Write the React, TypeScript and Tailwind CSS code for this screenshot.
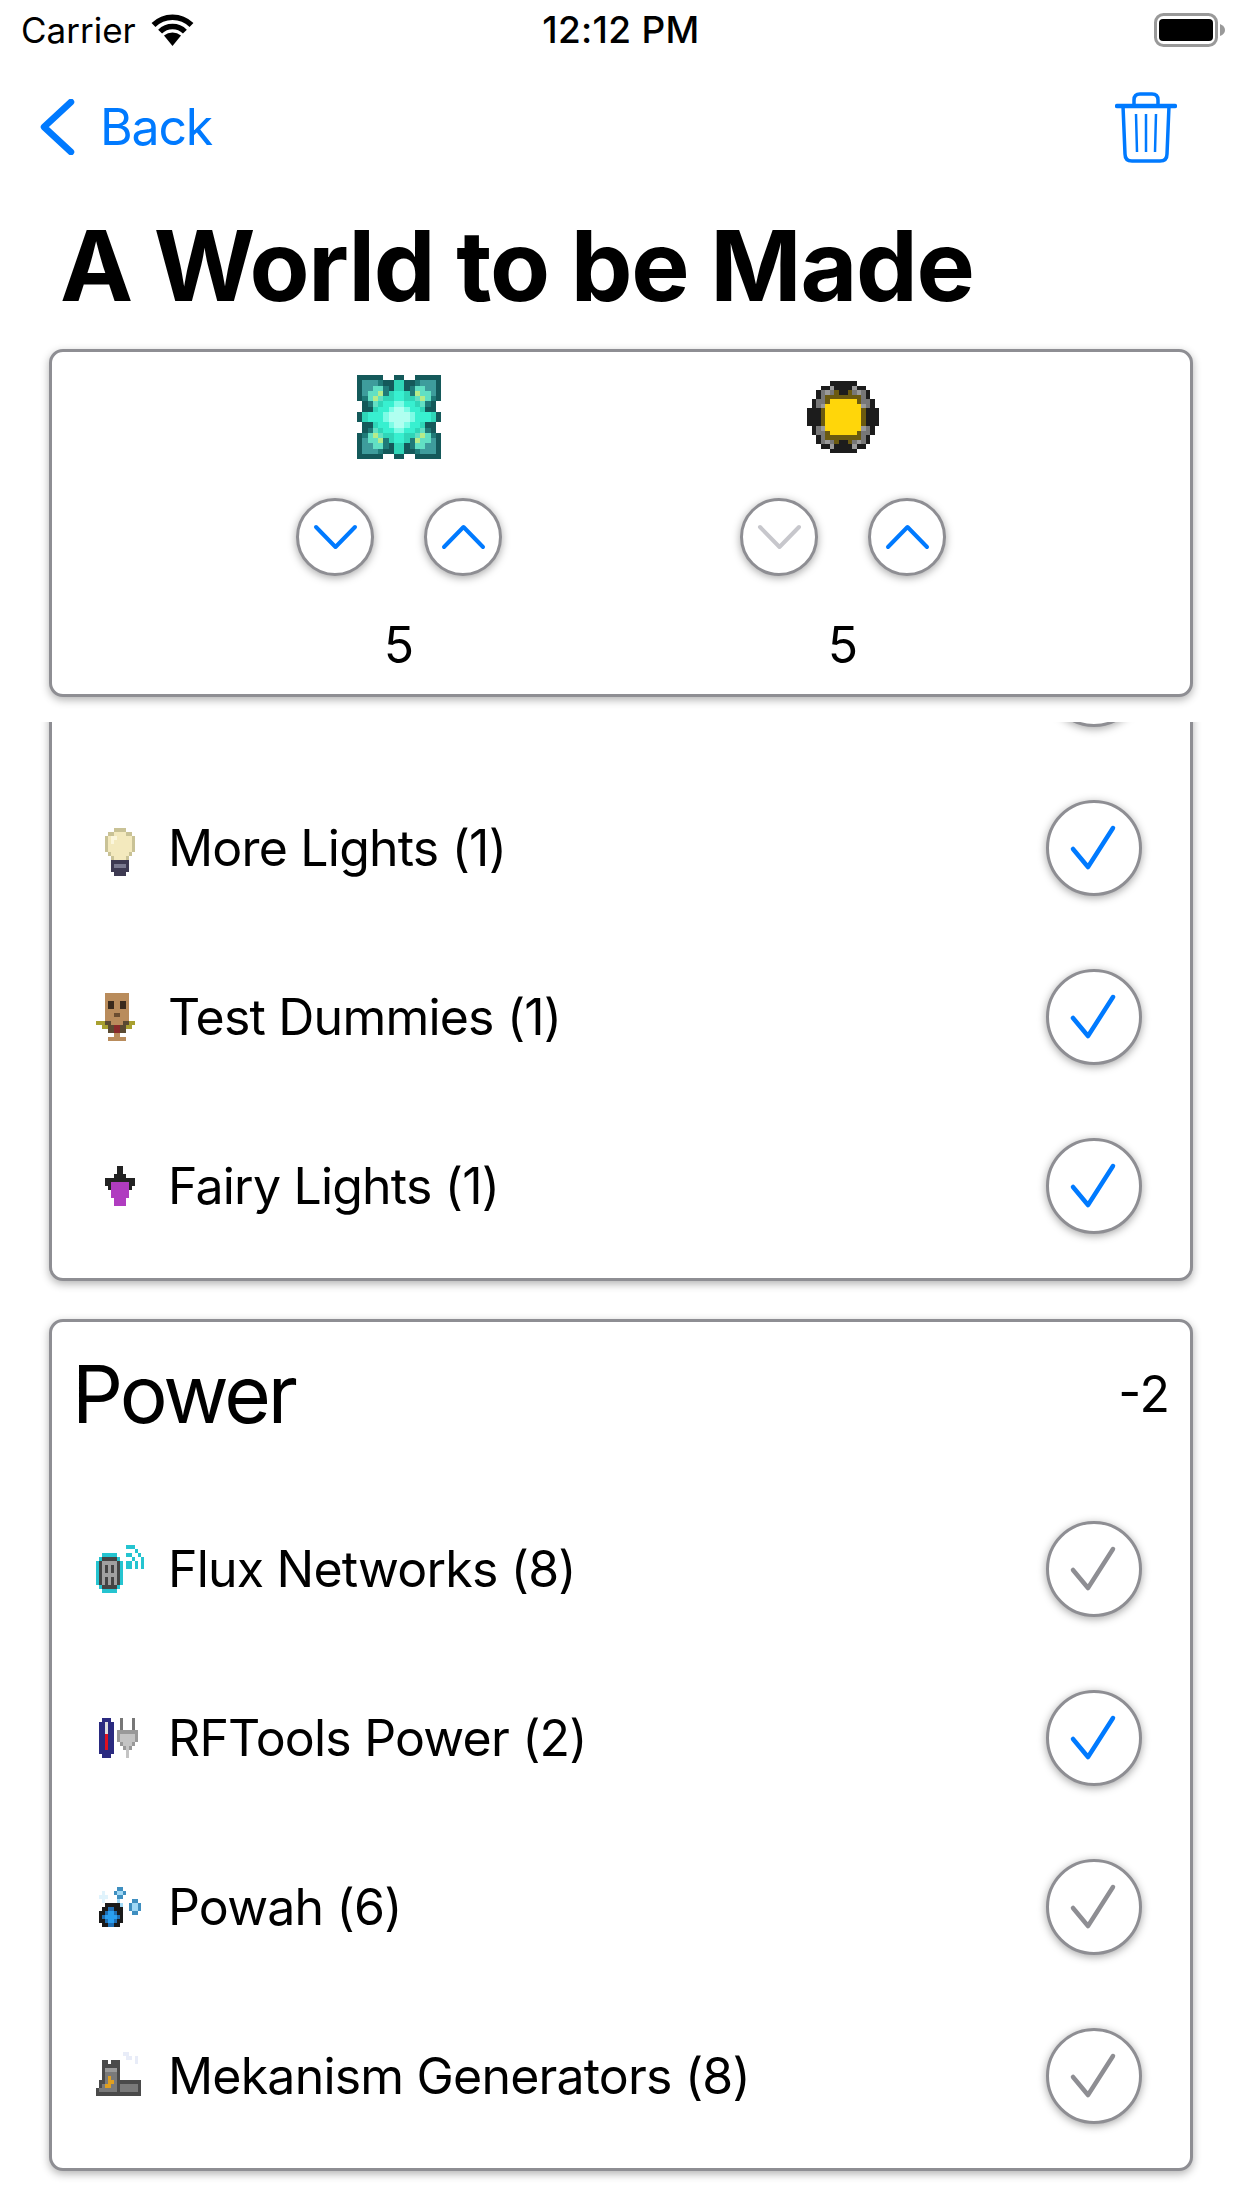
import React from 'react';

const PALETTE: Record<string, string> = {
  // diamond
  D: '#14595a', T: '#3e9c9c', t: '#1f7a78', G: '#2fd6b8', C: '#38f0d0', L: '#7dfce6', W: '#b0fff0', Y: '#b6ec8a', M: '#62e0c4',
  // gold
  X: '#1c1c1c', g: '#777777', l: '#9a9a9a', O: '#6b5a10', A: '#ffd60a',
};

const SMALL: Record<string, string> = {
  b: '#c9c296', c: '#f3e9bd', w: '#fbf6dc', d: '#3d3a52', e: '#7a7a90',
};

const mirror = (quarter: string[]) => {
  const top = quarter.map((r) => r + r.split('').reverse().join(''));
  return [...top, ...[...top].reverse()];
};

const DIAMOND = mirror([
  'DDDDD..D',
  'DTTTtDDG',
  'DTTMMtDG',
  'DTMMYtGC',
  'DtMYMGGC',
  '.DtMGCCL',
  '.DDGCCLW',
  'DGCCCLWW',
]);

const GOLD = mirror([
  '.....XXX',
  '...XXlXX',
  '..XglgOX',
  '..XgOOOO',
  '.XggOAAA',
  '.XglAAAA',
  'XXXOAAAA',
  'XXXOAAAA',
]);

const BULB = [
  '', '', '',
  '......bbbb......',
  '....bbccccbb....',
  '...bcwwcccccb...',
  '...bcwccccccb...',
  '...bccccccccb...',
  '...bccccccccb...',
  '....bccccccb....',
  '.....bccccb.....',
  '.....dddddd.....',
  '.....deeeed.....',
  '.....dddddd.....',
  '......dddd......',
];

const DUMMY = [
  '', '',
  '...bbbbbbbb',
  '...bbbbbbbb',
  '...bDDbbDDb',
  '...bDDbbDDb',
  '...bbbbbbbb',
  '...bbbnnbbb',
  '...bbbbbbbb',
  'yyyddbbbbddyy',
  '..yyddRRddyy',
  '....ddRRdd',
  '......bb',
  '....bbbbbb',
];

const FAIRY = [
  '', '', '',
  '.......XX',
  '.......XX',
  '......XXXX',
  '...XXXXXXXXXX',
  '...XXPPPPPPXX',
  '....XPPPPPPX',
  '.....PPPPPP',
  '.....PPPPPP',
  '......PPPP',
  '......PPPP',
];

const FLUX = [
  '', '',
  '..........ccc',
  '.............c',
  '..ccccc...cc..c',
  '.cdddddc....c..c',
  'cdgggggdc.cc.c.c',
  'cdgsgsgdc.cc.c.c',
  'cdgsgsgdc',
  'cdgggggdc',
  'cdgsgsgdc',
  'cdgsgsgdc',
  '.cdddddc',
  '..ccccc',
];

const RFTOOLS = [
  '', '', '',
  '..NNN...g...g',
  '.NNWNN..g...g',
  '.NNWNN..g...g',
  '.NNWNN.GGGGGGG',
  '.NNRNN.GLLLLLG',
  '.NNRNN.GLLLLLG',
  '.NNRNN..GLLLG',
  '.NNRNN...GLG',
  '.NNNNN....L',
  '..NNN.....L',
];

const POWAH = [
  '', '', '',
  '.......oo',
  '..q...oppo',
  '.qqq...oo',
  '..q....p....oo',
  '...kkkkkp..oppo',
  '..kkbbkkk..oppo',
  '.kkbBBbkk...oo',
  '.kbBBBBbk',
  '.kkbBBbkk',
  '..kkbbkk',
];

const MEK = [
  '', '',
  '.........ff',
  '..........ff.f',
  '..kk.kkk.....f',
  '..kkkkkk',
  '..kmmmmk',
  '..kMMMMk',
  '..kMOMMk',
  '.kkMOOMkkkkkkkk',
  '.kMOOMMkMMMMMMk',
  'kMMMMMMkMMMMMMk',
  'kkkkkkkkkkkkkkk',
];

const Pixels: React.FC<{ map: string[]; colors: Record<string, string>; className: string }> = ({ map, colors, className }) => (
  <svg viewBox="0 0 16 16" preserveAspectRatio="none" shapeRendering="crispEdges" className={className}>
    {map.flatMap((row, y) =>
      row.split('').map((ch, x) =>
        colors[ch] ? <rect key={`${x}-${y}`} x={x} y={y} width="1" height="1" fill={colors[ch]} /> : null
      )
    )}
  </svg>
);

const ICONS: Record<string, { map: string[]; colors: Record<string, string> }> = {
  bulb: { map: BULB, colors: SMALL },
  dummy: { map: DUMMY, colors: { b: '#b98c5c', D: '#3a2a1c', n: '#6b4d30', y: '#a8a030', d: '#5a4a32', R: '#8a2a2a' } },
  fairy: { map: FAIRY, colors: { X: '#222222', P: '#b03cc0' } },
  flux: { map: FLUX, colors: { c: '#25c4d0', d: '#444444', g: '#a0a0a0', s: '#444444' } },
  rftools: { map: RFTOOLS, colors: { N: '#2a2a80', W: '#dddddd', R: '#e01020', G: '#999999', g: '#777777', L: '#c4c4c4' } },
  powah: { map: POWAH, colors: { k: '#1a1a1a', B: '#2a9ff0', b: '#1f6fb5', o: '#3f8fc0', p: '#a0d8f5', q: '#e0f3fc' } },
  mek: { map: MEK, colors: { k: '#4a4a4a', m: '#9a9a9a', M: '#7a7a7a', O: '#e0a020', f: '#e8ecf8' } },
};

const Round: React.FC<{ big?: boolean; children?: React.ReactNode }> = ({ big, children }) => (
  <div
    className={`${big ? 'w-[96px] h-[96px]' : 'w-[78px] h-[78px]'} shrink-0 rounded-full bg-white border-[3px] border-[#8e8e93] shadow-[0_2px_8px_rgba(0,0,0,0.35)] flex items-center justify-center`}
  >
    {children}
  </div>
);

const Chevron: React.FC<{ up?: boolean; color: string }> = ({ up, color }) => (
  <svg width="47" height="28" viewBox="0 0 47 28" fill="none">
    <path d={up ? 'M4 24 L23.5 4 L43 24' : 'M4 4 L23.5 24 L43 4'} stroke={color} strokeWidth="4" strokeLinecap="round" strokeLinejoin="round" />
  </svg>
);

const Check: React.FC<{ on: boolean }> = ({ on }) => (
  <svg width="50" height="50" viewBox="0 0 50 50" fill="none">
    <path d="M4 26 L19 44 L44 5" stroke={on ? '#007aff' : '#8e8e93'} strokeWidth="4.5" strokeLinecap="round" strokeLinejoin="round" />
  </svg>
);

const Row: React.FC<{ icon: string; label: string; on: boolean }> = ({ icon, label, on }) => (
  <div className="h-[169px] flex items-center pl-[44px] pr-[48px]">
    <Pixels map={ICONS[icon].map} colors={ICONS[icon].colors} className="w-[48px] h-[64px] shrink-0 blur-[0.6px]" />
    <span className="ml-[24px] flex-1 text-[50px] leading-[60px] tracking-[-0.8px] text-black">{label}</span>
    <Round big>
      <Check on={on} />
    </Round>
  </div>
);

const Stepper: React.FC<{ map: string[]; iconClass: string; downEnabled: boolean }> = ({ map, iconClass, downEnabled }) => (
  <div className="w-[206px] flex flex-col items-center">
    <div className="h-[84px] flex items-center justify-center">
      <Pixels map={map} colors={PALETTE} className={iconClass} />
    </div>
    <div className="mt-[39px] flex gap-[50px]">
      <Round>
        <Chevron color={downEnabled ? '#007aff' : '#c7c7cc'} />
      </Round>
      <Round>
        <Chevron up color="#007aff" />
      </Round>
    </div>
    <div className="mt-[39px] text-[50px] leading-[60px] text-black">5</div>
  </div>
);

const cardClass = 'bg-white rounded-[14px] border-[3px] border-[#8e8e93] shadow-[0_3px_9px_rgba(0,0,0,0.3)]';

export default function App() {
  return (
    <div className="w-[1242px] h-[2208px] overflow-hidden bg-white flex flex-col font-['Inter',sans-serif]">
      {/* status bar */}
      <div className="h-[60px] shrink-0 grid grid-cols-3 items-center px-[21px] text-[35px] text-black">
        <div className="flex items-center gap-[14px]">
          <span>Carrier</span>
          <svg width="45" height="32" viewBox="0 0 45 32" fill="none">
            <path d="M22.5 32 L14 21.5 A13.5 13.5 0 0 1 31 21.5 Z" fill="black" />
            <path d="M10.1 17.6 A17.5 17.5 0 0 1 34.9 17.6" stroke="black" strokeWidth="5.5" />
            <path d="M3.5 11 A27 27 0 0 1 41.5 11" stroke="black" strokeWidth="5.5" />
          </svg>
        </div>
        <div className="text-center font-medium text-[37px] tracking-[0.3px]">12:12 PM</div>
        <div className="flex justify-end">
          <svg width="72" height="34" viewBox="0 0 72 34" fill="none" className="-mr-[5px]">
            <rect x="1.5" y="1.5" width="61" height="31" rx="8" stroke="#999999" strokeWidth="3" />
            <rect x="5" y="6" width="54" height="22" rx="4" fill="black" />
            <path d="M66 11 Q71 13 71 17 Q71 21 66 23 Z" fill="#999999" />
          </svg>
        </div>
      </div>

      {/* nav bar */}
      <div className="h-[120px] shrink-0 flex items-center justify-between pl-[40px] pr-[65px] pt-[14px] text-[#007aff]">
        <div className="flex items-center">
          <svg width="36" height="56" viewBox="0 0 36 56" fill="none">
            <path d="M31 3 L4 28 L31 53" stroke="#007aff" strokeWidth="6.5" strokeLinecap="round" strokeLinejoin="round" />
          </svg>
          <span className="ml-[24px] text-[50px] leading-[60px] tracking-[-1.2px]">Back</span>
        </div>
        <svg width="62" height="71" viewBox="0 0 62 71" fill="none" stroke="#007aff">
          <path d="M2 14 H60" strokeWidth="4.5" strokeLinecap="round" />
          <path d="M19 14 V8 Q19 2 25 2 H37 Q43 2 43 8 V14" strokeWidth="3.5" />
          <path d="M8 14 L10 62 Q10 69 17 69 H45 Q52 69 52 62 L54 14" strokeWidth="3.5" />
          <path d="M21 22 L22 60 M31 22 V60 M41 22 L40 60" strokeWidth="2.5" />
        </svg>
      </div>

      {/* title */}
      <div className="h-[169px] shrink-0 pl-[60px] pt-[2px] flex items-center">
        <h1 className="text-[98px] leading-[120px] font-bold tracking-[-1.25px] text-black">A World to be Made</h1>
      </div>

      {/* pinned summary */}
      <div className="px-[49px] shrink-0">
        <div className={`${cardClass} h-[348px] pt-[23px] flex justify-center gap-[238px]`}>
          <Stepper map={DIAMOND} iconClass="w-[84px] h-[84px] blur-[0.5px]" downEnabled />
          <Stepper map={GOLD} iconClass="w-[72px] h-[72px] blur-[0.5px]" downEnabled={false} />
        </div>
      </div>

      {/* scrolled list */}
      <div className="mt-[25px] flex-1 overflow-hidden px-[49px]">
        <div className="-mt-[131px] flex flex-col gap-[38px]">
          <div className={`${cardClass} pb-[8px]`}>
            <div className="h-[169px] flex items-center justify-end pr-[48px]">
              <Round big />
            </div>
            <Row icon="bulb" label="More Lights (1)" on />
            <Row icon="dummy" label="Test Dummies (1)" on />
            <Row icon="fairy" label="Fairy Lights (1)" on />
          </div>
          <div className={`${cardClass} pb-[8px]`}>
            <div className="h-[162px] flex items-start justify-between pl-[20px] pr-[20px] pt-[22px]">
              <span className="text-[80px] leading-[100px] tracking-[-3px] text-black">Power</span>
              <span className="text-[50px] leading-[60px] text-black mt-[20px]">-2</span>
            </div>
            <Row icon="flux" label="Flux Networks (8)" on={false} />
            <Row icon="rftools" label="RFTools Power (2)" on />
            <Row icon="powah" label="Powah (6)" on={false} />
            <Row icon="mek" label="Mekanism Generators (8)" on={false} />
          </div>
        </div>
      </div>
    </div>
  );
}
